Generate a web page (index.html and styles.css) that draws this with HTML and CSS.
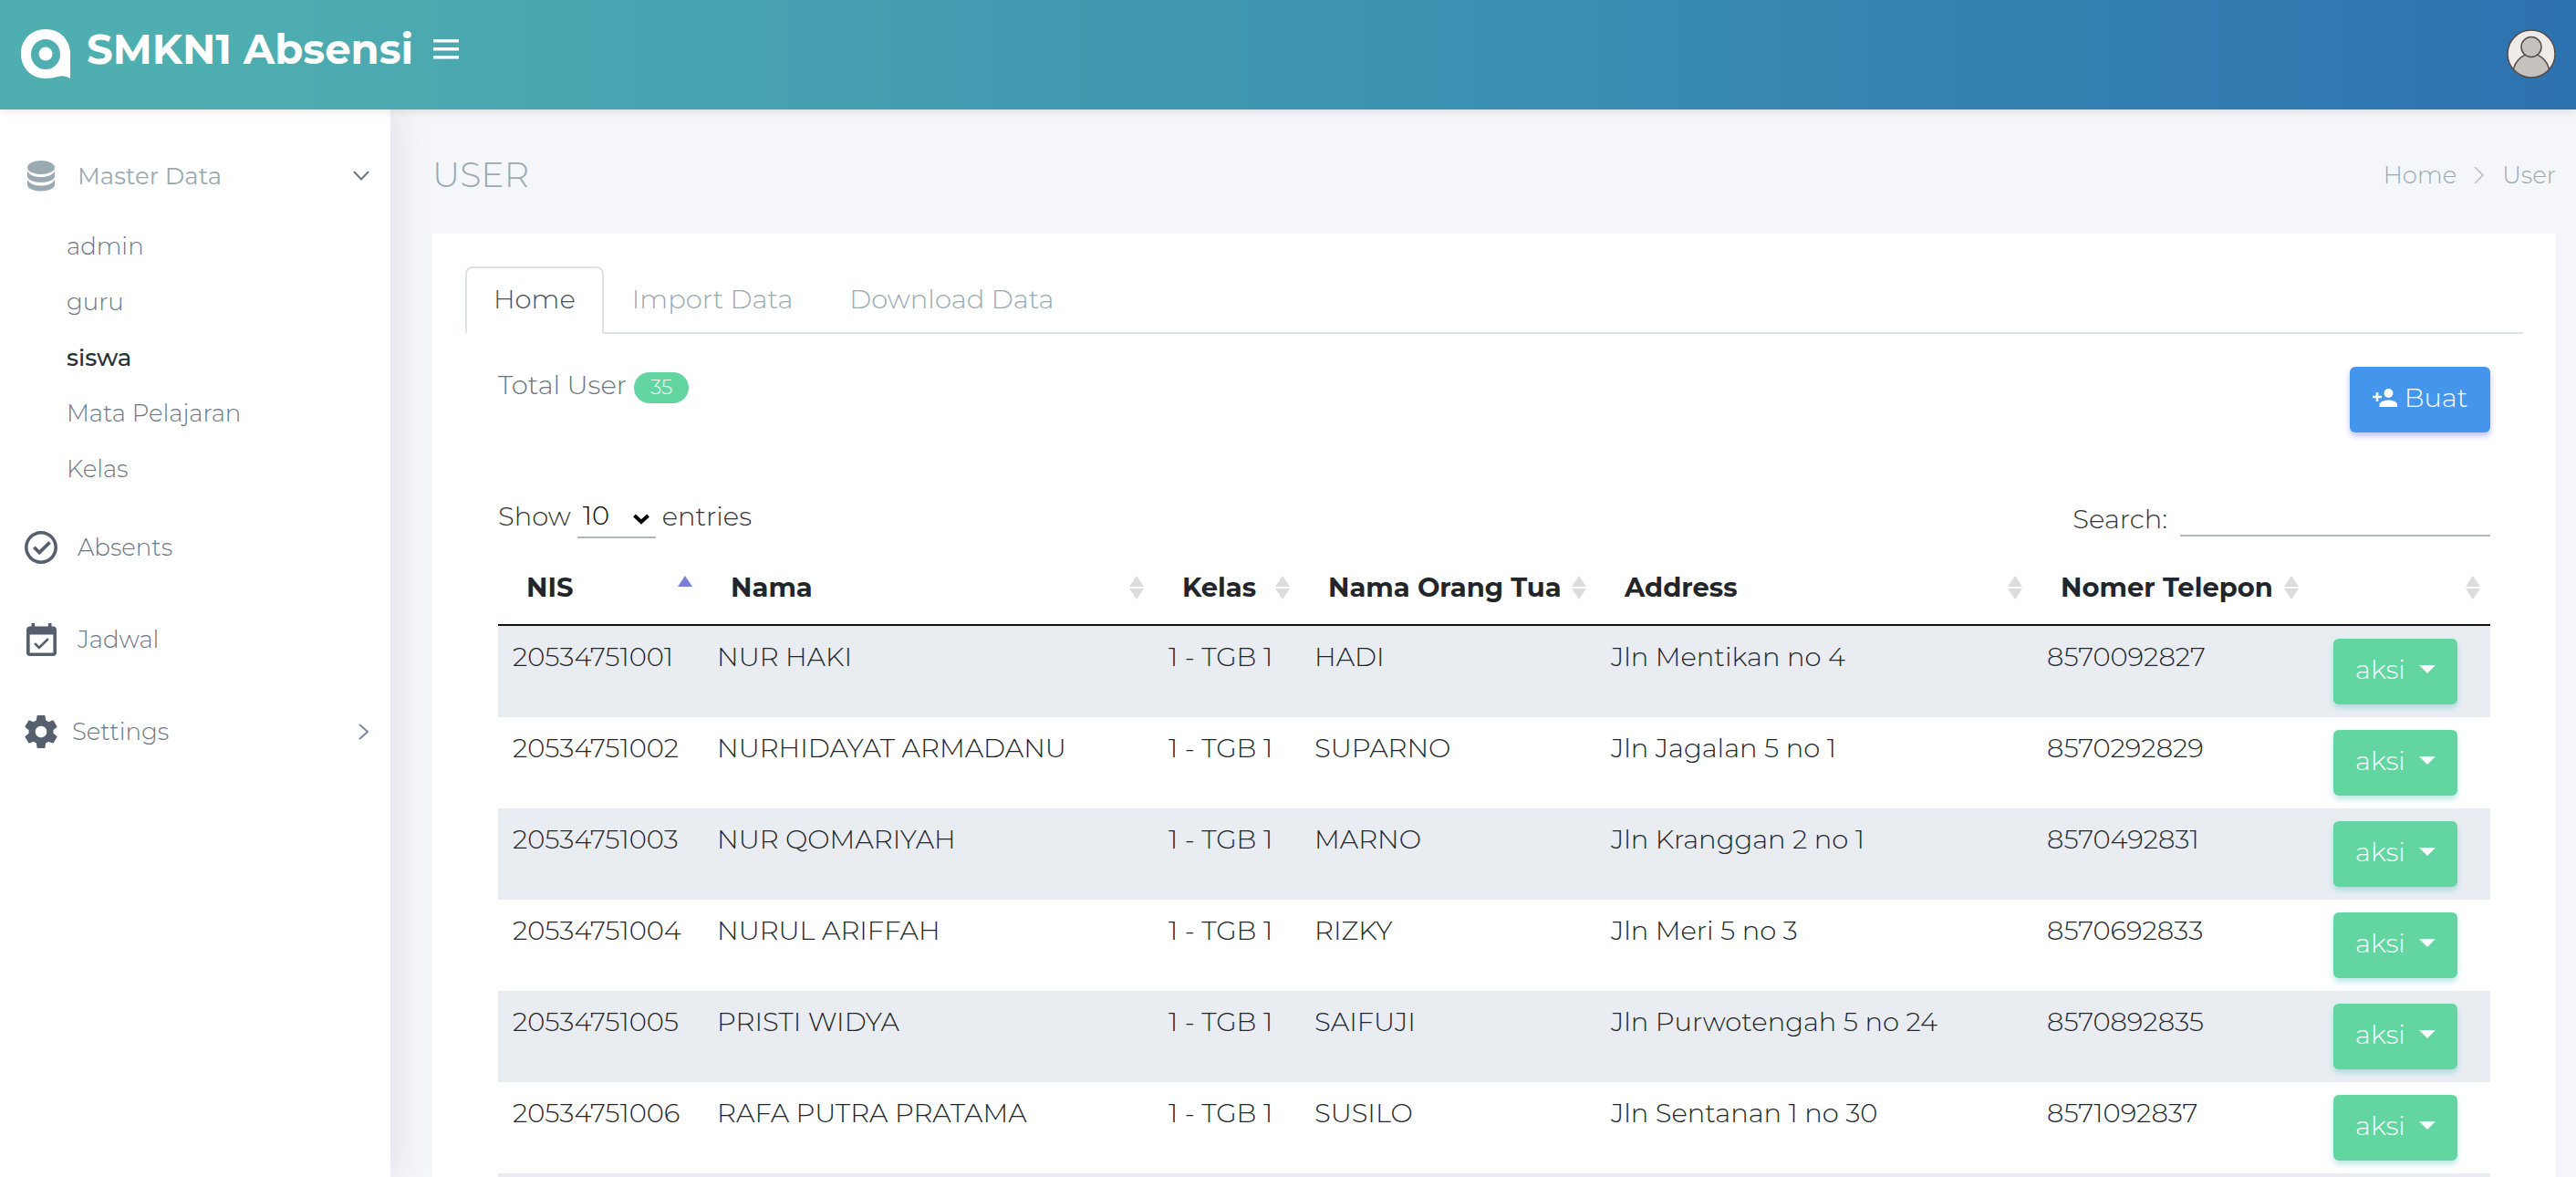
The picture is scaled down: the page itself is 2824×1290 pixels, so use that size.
FILE: index.html
```html
<!DOCTYPE html>
<html lang="id">
<head>
<meta charset="utf-8">
<meta name="viewport" content="width=device-width, initial-scale=1">
<title>SMKN1 Absensi</title>
<link rel="stylesheet" href="styles.css">
</head>
<body>
<svg class="symbols" aria-hidden="true">
  <symbol id="sort" viewBox="0 0 16 26"><path d="M8 0l8 12H0zM8 26l8-12H0z"/></symbol>
  <symbol id="sort-asc" viewBox="0 0 16 26"><path d="M8 0l8 12H0z"/></symbol>
</svg>
<header class="topbar">
  <a class="brand" href="#">
    <svg class="logo" viewBox="0 0 54 54" aria-hidden="true"><path fill="#fff" fill-rule="evenodd" d="M27 0C42 0 54 11 54 27V54Q48 50 40 52Q34 54 27 54C12 54 0 43 0 27S12 0 27 0zM27 11a16 16.500 0 1 0 0 33a16 16.500 0 1 0 0-33z"/><circle cx="27" cy="27" r="7.500" fill="#fff"/></svg>
    <span>SMKN1 Absensi</span>
  </a>
  <button class="menu-btn" type="button" aria-label="Menu">
    <svg viewBox="0 0 28 22"><path fill="#fff" d="M0 0h28v3.500H0zM0 9h28v3.500H0zM0 18h28v3.500H0z"/></svg>
  </button>
  <button class="avatar" type="button" aria-label="Profil">
    <svg viewBox="0 0 54 54"><defs><clipPath id="face"><circle cx="27" cy="27" r="26"/></clipPath></defs><circle cx="27" cy="27" r="26" fill="#efebe7"/><g clip-path="url(#face)" fill="#c5c1bc" stroke="#544c48" stroke-width="1.500"><ellipse cx="27" cy="49" rx="20" ry="22"/><circle cx="27" cy="19.500" r="11"/></g><circle cx="27" cy="27" r="26" fill="none" stroke="#544c48" stroke-width="1.500"/></svg>
  </button>
</header>
<div class="layout">
  <nav class="sidebar">
    <a class="item item-open" href="#">
      <span class="ico"><svg width="30" height="34" viewBox="0 0 30 34" fill="#9aa9b2"><ellipse cx="15" cy="7.500" rx="15" ry="7.500"/><path d="M0 11.500c3 5 9 6.500 15 6.500s12-1.500 15-6.500V17c0 4-7 7-15 7S0 21 0 17zM0 21c3 5 9 6.500 15 6.500S27 26 30 21v5.500c0 4-7 7-15 7s-15-3-15-7z"/></svg></span>
      <span class="label">Master Data</span>
      <svg class="arrow" width="18" height="12" viewBox="0 0 18 12"><path d="M1 1l8 8.500L17 1" fill="none" stroke="#6b7786" stroke-width="2"/></svg>
    </a>
    <ul class="submenu">
      <li><a href="#">admin</a></li>
      <li><a href="#">guru</a></li>
      <li><a class="active" href="#">siswa</a></li>
      <li><a href="#">Mata Pelajaran</a></li>
      <li><a href="#">Kelas</a></li>
    </ul>
    <a class="item" href="#">
      <span class="ico"><svg width="36" height="36" viewBox="2 2 20 20" fill="#555f6e"><path d="M12 2C6.480 2 2 6.480 2 12s4.480 10 10 10 10-4.480 10-10S17.520 2 12 2zm0 18c-4.410 0-8-3.590-8-8s3.590-8 8-8 8 3.590 8 8-3.590 8-8 8zM16.590 8.100 11 13.700l-2.600-2.500L7 12.600l4 4 7-7z"/></svg></span>
      <span class="label">Absents</span>
    </a>
    <a class="item" href="#">
      <span class="ico"><svg width="33" height="36" viewBox="3 1 18 20" preserveAspectRatio="none" fill="#555f6e"><path d="M16.530 11.060l-1.060-1.060-4.880 4.880-2.120-2.120-1.060 1.060L10.590 17l5.940-5.940zM19 3h-1V1h-2v2H8V1H6v2H5c-1.110 0-1.990.9-1.990 2L3 19c0 1.100.89 2 2 2h14c1.100 0 2-.9 2-2V5c0-1.100-.9-2-2-2zm0 16H5V8h14v11z"/></svg></span>
      <span class="label">Jadwal</span>
    </a>
    <a class="item item-tight" href="#">
      <span class="ico"><svg width="36" height="36" viewBox="2 2 20 20" fill="#555f6e"><path d="M19.430 12.980c.04-.32.070-.64.070-.98s-.03-.66-.07-.98l2.110-1.650c.19-.15.240-.42.120-.64l-2-3.460c-.12-.22-.39-.3-.61-.22l-2.490 1c-.52-.4-1.080-.73-1.690-.98l-.38-2.650C14.460 2.180 14.250 2 14 2h-4c-.25 0-.46.180-.49.420l-.38 2.650c-.61.250-1.170.590-1.690.980l-2.490-1c-.23-.09-.49 0-.61.220l-2 3.460c-.13.220-.07.490.120.640l2.110 1.650c-.04.320-.07.650-.07.980s.03.660.070.980l-2.110 1.650c-.19.150-.24.420-.12.640l2 3.460c.12.220.39.300.61.220l2.490-1c.52.400 1.080.730 1.690.980l.38 2.650c.03.240.24.420.49.420h4c.25 0 .46-.18.490-.42l.38-2.650c.61-.25 1.170-.59 1.690-.98l2.490 1c.23.090.49 0 .61-.22l2-3.460c.12-.22.070-.49-.12-.64l-2.110-1.650zM12 15.500c-1.930 0-3.500-1.570-3.500-3.500s1.570-3.500 3.500-3.500 3.500 1.570 3.500 3.500-1.570 3.500-3.500 3.500z"/></svg></span>
      <span class="label">Settings</span>
      <svg class="arrow" width="12" height="18" viewBox="0 0 12 18"><path d="M1 1l9 8-9 8" fill="none" stroke="#7d8896" stroke-width="2"/></svg>
    </a>
  </nav>
  <main class="content">
    <div class="page-head">
      <h1>USER</h1>
      <nav class="crumbs" aria-label="Breadcrumb">
        <a href="#">Home</a>
        <svg width="12" height="18" viewBox="0 0 12 18"><path d="M1 0l9 9-9 9" fill="none" stroke="#b4bfc6" stroke-width="1.500"/></svg>
        <span>User</span>
      </nav>
    </div>
    <section class="card">
      <div class="tabs" role="tablist">
        <button class="tab tab-active" type="button" role="tab" aria-selected="true">Home</button>
        <button class="tab" type="button" role="tab">Import Data</button>
        <button class="tab" type="button" role="tab">Download Data</button>
      </div>
      <div class="panel">
        <div class="summary">
          <div class="total"><span>Total User</span><span class="badge">35</span></div>
          <button class="btn btn-blue" type="button">
            <svg width="27" height="20" viewBox="0 0 27 20" fill="#fff"><circle cx="17.500" cy="5" r="5"/><path d="M7.500 20v-2.500c0-3.500 6-5 10-5s9.500 1.500 9.500 5V20zM3.700 4h2.600v3.700H10v2.600H6.300V14H3.700v-3.700H0V7.700h3.700z"/></svg>
            Buat
          </button>
        </div>
        <div class="controls">
          <label class="length">Show
            <span class="select"><select><option>10</option><option>25</option><option>50</option></select><svg width="20" height="12" viewBox="0 0 20 12"><path d="M2.500 2l7.500 7 7.500-7" fill="none" stroke="#000" stroke-width="4"/></svg></span>
            entries</label>
          <label class="search">Search: <input type="search"></label>
        </div>
        <table class="grid">
          <colgroup><col class="c-nis"><col class="c-nama"><col class="c-kelas"><col class="c-ortu"><col class="c-alamat"><col class="c-telp"><col class="c-aksi"></colgroup>
          <thead>
            <tr>
              <th><div>NIS<svg class="asc"><use href="#sort-asc"/></svg></div></th>
              <th><div>Nama<svg><use href="#sort"/></svg></div></th>
              <th><div>Kelas<svg><use href="#sort"/></svg></div></th>
              <th><div>Nama Orang Tua<svg><use href="#sort"/></svg></div></th>
              <th><div>Address<svg><use href="#sort"/></svg></div></th>
              <th><div>Nomer Telepon<svg><use href="#sort"/></svg></div></th>
              <th><div><span></span><svg><use href="#sort"/></svg></div></th>
            </tr>
          </thead>
          <tbody>
            <tr><td>20534751001</td><td>NUR HAKI</td><td>1 - TGB 1</td><td>HADI</td><td>Jln Mentikan no 4</td><td>8570092827</td><td class="act"><button class="btn btn-green" type="button">aksi<i></i></button></td></tr>
            <tr><td>20534751002</td><td>NURHIDAYAT ARMADANU</td><td>1 - TGB 1</td><td>SUPARNO</td><td>Jln Jagalan 5 no 1</td><td>8570292829</td><td class="act"><button class="btn btn-green" type="button">aksi<i></i></button></td></tr>
            <tr><td>20534751003</td><td>NUR QOMARIYAH</td><td>1 - TGB 1</td><td>MARNO</td><td>Jln Kranggan 2 no 1</td><td>8570492831</td><td class="act"><button class="btn btn-green" type="button">aksi<i></i></button></td></tr>
            <tr><td>20534751004</td><td>NURUL ARIFFAH</td><td>1 - TGB 1</td><td>RIZKY</td><td>Jln Meri 5 no 3</td><td>8570692833</td><td class="act"><button class="btn btn-green" type="button">aksi<i></i></button></td></tr>
            <tr><td>20534751005</td><td>PRISTI WIDYA</td><td>1 - TGB 1</td><td>SAIFUJI</td><td>Jln Purwotengah 5 no 24</td><td>8570892835</td><td class="act"><button class="btn btn-green" type="button">aksi<i></i></button></td></tr>
            <tr><td>20534751006</td><td>RAFA PUTRA PRATAMA</td><td>1 - TGB 1</td><td>SUSILO</td><td>Jln Sentanan 1 no 30</td><td>8571092837</td><td class="act"><button class="btn btn-green" type="button">aksi<i></i></button></td></tr>
            <tr><td colspan="7"></td></tr>
          </tbody>
        </table>
      </div>
    </section>
  </main>
</div>
</body>
</html>
```

FILE: styles.css
```css
*, *::before, *::after { box-sizing: border-box; }

body {
  margin: 0;
  height: 100vh;
  display: flex;
  flex-direction: column;
  overflow: hidden;
  background: #f4f6fa;
  color: #22262a;
  font: 300 29px/42px Montserrat, Inter, sans-serif;
}

a { color: inherit; text-decoration: none; }
button, input, select { font: inherit; color: inherit; }
button { border: 0; background: none; padding: 0; cursor: pointer; }
svg { display: block; flex: none; }
.symbols { position: absolute; width: 0; height: 0; }

/* Top bar */
.topbar {
  position: relative;
  z-index: 2;
  flex: none;
  display: flex;
  align-items: center;
  height: 120px;
  padding: 0 22px 2px 23px;
  background: linear-gradient(to right, #4fafb0 6%, #3d92b1 54%, #2d72b0);
  box-shadow: 0 2px 10px rgba(0, 0, 0, 0.1);
}
.brand {
  display: flex;
  align-items: center;
  gap: 18px;
  color: #fff;
  font-size: 45px;
  font-weight: 700;
}
.brand span { padding-bottom: 10px; }
.logo { width: 54px; height: 54px; }
.menu-btn { margin: 0 auto 10px 22px; }
.menu-btn svg { width: 28px; height: 22px; }
.avatar svg { width: 54px; height: 54px; }

.layout { flex: 1; min-height: 0; display: flex; }

/* Sidebar */
.sidebar {
  flex: none;
  width: 428px;
  padding-top: 28px;
  background: #fff;
  box-shadow: 2px 0 40px rgba(40, 40, 60, 0.12);
  color: #6b7786;
  font-size: 26px;
}
.item {
  display: flex;
  align-items: center;
  height: 101px;
  padding: 0 23px 2px 27px;
}
.item-open { height: 92px; color: #9aa9b2; font-weight: 400; }
.ico {
  width: 36px;
  margin-right: 22px;
  display: flex;
  justify-content: center;
}
.item-tight .ico { margin-right: 16px; }
.arrow { margin-left: auto; }
.submenu { margin: 0 0 5px; padding: 0; list-style: none; }
.submenu a { display: block; padding-left: 73px; line-height: 61px; }
.submenu .active { color: #263238; font-weight: 500; }

/* Content */
.content {
  flex: 1;
  min-width: 0;
  padding: 0 22px 0 46px;
}
.page-head {
  display: flex;
  justify-content: space-between;
  align-items: center;
  height: 136px;
  padding-top: 8px;
  color: #9aa9b2;
}
h1 { margin: 0; font-size: 38px; font-weight: 300; }
.crumbs { display: flex; align-items: center; gap: 19px; font-size: 26px; }

.card { padding: 36px; background: #fff; }
.tabs {
  display: flex;
  height: 74px;
  border-bottom: 2px solid #dee2e6;
}
.tab {
  height: 74px;
  padding: 0 29px 2px;
  border: 2px solid transparent;
  color: #9aa9b2;
}
.tab-active {
  border-color: #dee2e6 #dee2e6 #fff;
  border-radius: 8px 8px 0 0;
  background: #fff;
  color: #495057;
}

.panel { padding: 36px 36px 0; }
.summary { display: flex; justify-content: space-between; align-items: flex-start; }
.total { display: flex; align-items: flex-end; gap: 8px; color: #67757c; line-height: 40px; }
.badge {
  min-width: 60px;
  border-radius: 17px;
  background: #62d5a1;
  color: #fff;
  font-size: 22px;
  line-height: 34px;
  text-align: center;
}
.btn {
  display: flex;
  align-items: center;
  justify-content: center;
  height: 72px;
  padding-bottom: 4px;
  border-radius: 6px;
  color: #fff;
}
.btn-blue {
  gap: 8px;
  width: 154px;
  background: #4495ec;
  box-shadow: 0 4px 6px rgba(80, 80, 230, 0.35);
}
.btn-green {
  gap: 15px;
  width: 136px;
  background: #62d5a1;
  box-shadow: 0 4px 6px rgba(60, 190, 190, 0.35);
}
.btn-green i {
  margin-bottom: 2px;
  border: 9px solid transparent;
  border-top-color: #fff;
  border-bottom: 0;
}

.controls {
  display: flex;
  justify-content: space-between;
  align-items: flex-end;
  height: 116px;
  color: #333;
}
.length, .search { display: flex; align-items: center; }
.length { gap: 7px; }
.select {
  display: grid;
  align-items: center;
  width: 86px;
  height: 48px;
  border-bottom: 2px solid #b1b8bb;
  color: #000;
}
.select select {
  grid-area: 1 / 1;
  appearance: none;
  border: 0;
  padding: 0 0 0 6px;
  background: none;
}
.select svg { grid-area: 1 / 1; justify-self: end; margin: 8px 6px 0 0; pointer-events: none; }
.search { align-items: flex-end; gap: 14px; line-height: 42px; }
.search input {
  width: 340px;
  height: 42px;
  margin-bottom: 2px;
  border: 0;
  border-bottom: 2px solid #b1b8bb;
  background: none;
}

/* Data table */
.grid {
  width: 100%;
  margin-top: 33px;
  border-collapse: separate;
  border-spacing: 0;
  table-layout: fixed;
}
.c-nis { width: 10.26%; }
.c-nama { width: 22.66%; }
.c-kelas { width: 7.33%; }
.c-ortu { width: 14.88%; }
.c-alamat { width: 21.89%; }
.c-telp { width: 13.87%; }
.c-aksi { width: 9.11%; }
.grid th {
  padding: 0 11px 19px 31px;
  border-bottom: 2px solid #111;
  font-weight: 700;
  text-align: left;
  white-space: nowrap;
}
.grid th div { display: flex; justify-content: space-between; align-items: center; }
.grid th svg { width: 16px; height: 26px; fill: #dcdcdc; }
.grid th .asc { fill: #7a80d8; }
.grid td { height: 100px; padding: 13px 16px; vertical-align: top; white-space: nowrap; }
.grid tbody tr:nth-child(odd) { background: #e9edf2; }
.grid .act { padding: 14px 27px; }
```
